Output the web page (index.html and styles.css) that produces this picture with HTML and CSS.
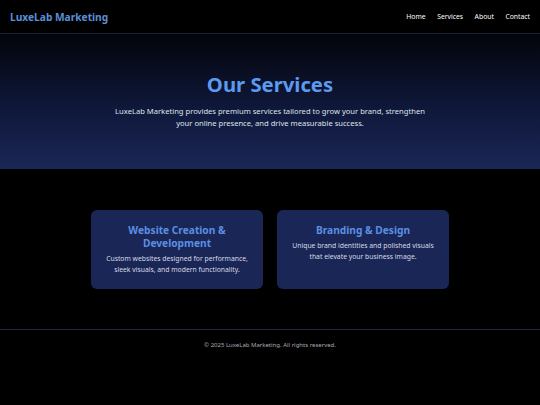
FILE: index.html
```html
<!DOCTYPE html>
<html lang="en">
<head>
<meta charset="utf-8">
<title>LuxeLab Marketing - Services</title>
<link rel="stylesheet" href="styles.css">
</head>
<body>
<header class="site-header">
  <div class="logo">LuxeLab Marketing</div>
  <nav class="nav">
    <a href="#">Home</a>
    <a href="#">Services</a>
    <a href="#">About</a>
    <a href="#">Contact</a>
  </nav>
</header>
<section class="hero">
  <h1>Our Services</h1>
  <p>LuxeLab Marketing provides premium services tailored to grow your brand, strengthen your online presence, and drive measurable success.</p>
</section>
<main class="services">
  <div class="card">
    <h2>Website Creation &amp; Development</h2>
    <p>Custom websites designed for performance, sleek visuals, and modern functionality.</p>
  </div>
  <div class="card">
    <h2>Branding &amp; Design</h2>
    <p>Unique brand identities and polished visuals that elevate your business image.</p>
  </div>
</main>
<footer class="footer">
  <p>&copy; 2025 LuxeLab Marketing. All rights reserved.</p>
</footer>
</body>
</html>
```

FILE: styles.css
```css
* { box-sizing: border-box; }
html, body { margin: 0; padding: 0; background: #000; }
body {
  font-family: "Noto Sans", "Open Sans", sans-serif;
  color: #fff;
  min-height: 405px;
}
.site-header {
  height: 34px;
  display: flex;
  align-items: center;
  justify-content: space-between;
  padding: 0 10px;
  border-bottom: 1px solid #1b2136;
}
.logo {
  font-size: 10.2px;
  font-weight: 700;
  color: #5b8fd6;
}
.nav { display: flex; gap: 11.5px; }
.nav a {
  color: #fff;
  text-decoration: none;
  font-size: 6.8px;
}
.hero {
  height: 135px;
  background: linear-gradient(to bottom, #03040a 0%, #0f183a 55%, #1a2656 100%);
  text-align: center;
  padding-top: 36px;
}
.hero h1 {
  margin: 0;
  font-size: 20.3px;
  line-height: 28px;
  font-weight: 700;
  color: #5b9af0;
}
.hero p {
  margin: 7px auto 0;
  max-width: 316px;
  font-size: 7.6px;
  line-height: 12px;
  color: #dfe2ea;
}
.services {
  display: flex;
  justify-content: center;
  gap: 14px;
  padding: 41px 0 40px;
}
.card {
  width: 172px;
  height: 79px;
  background: #1a2656;
  border-radius: 6px;
  text-align: center;
  padding: 14px 12px 0;
}
.card h2 {
  margin: 0;
  font-size: 10.2px;
  line-height: 13.2px;
  font-weight: 700;
  color: #5b8fe2;
}
.card p {
  margin: 4px 0 0;
  font-size: 6.8px;
  line-height: 10.5px;
  color: #d8dbe6;
}
.footer {
  border-top: 1px solid #23254d;
  text-align: center;
  padding-top: 10px;
}
.footer p {
  margin: 0;
  font-size: 6px;
  line-height: 10px;
  color: #a9abb5;
}
```
